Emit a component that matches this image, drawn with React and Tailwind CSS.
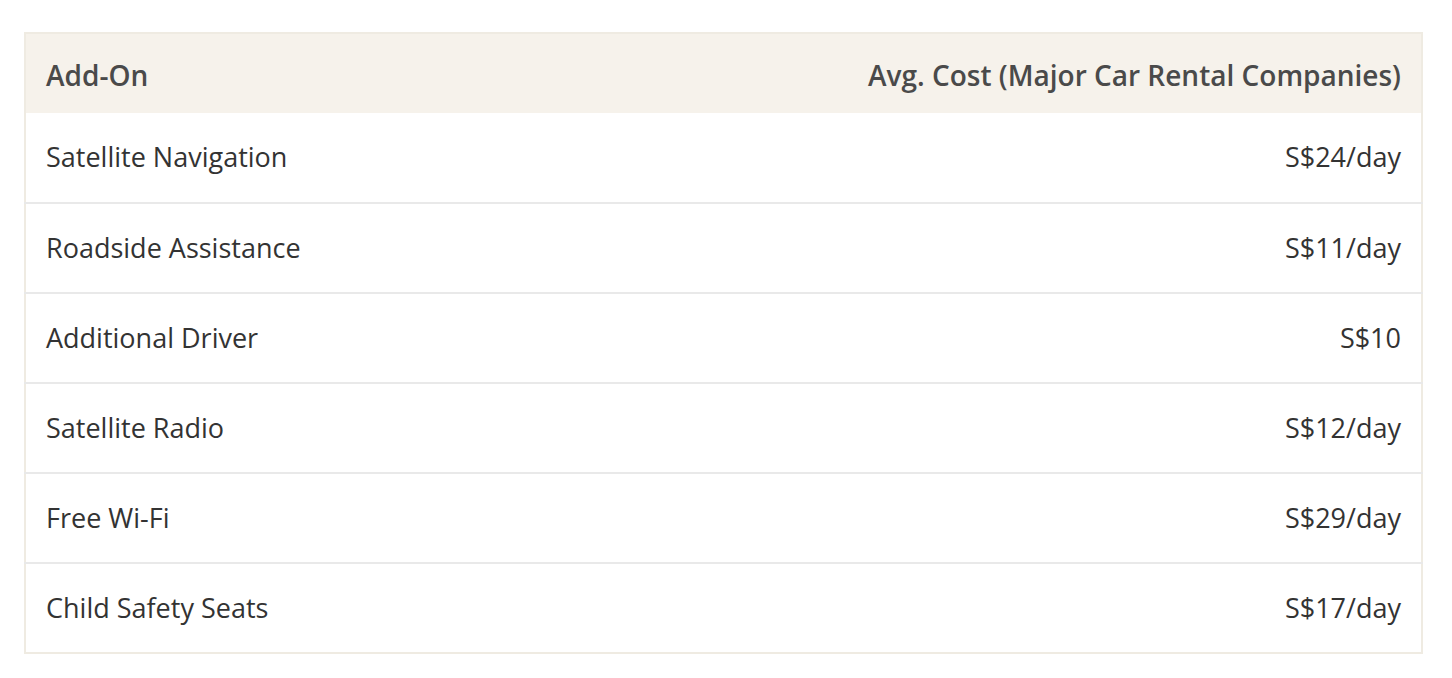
export default function App() {
  const rows = [
    ["Satellite Navigation", "S$24/day"],
    ["Roadside Assistance", "S$11/day"],
    ["Additional Driver", "S$10"],
    ["Satellite Radio", "S$12/day"],
    ["Free Wi-Fi", "S$29/day"],
    ["Child Safety Seats", "S$17/day"],
  ];
  return (
    <div className="w-[1452px] h-[678px] bg-white pt-[32px] px-[24px]" style={{ fontFamily: "'Open Sans', sans-serif" }}>
      <table className="w-[1399px] border-collapse border-2 border-[#efebe2]">
        <thead>
          <tr className="bg-[#f6f2eb] h-[80px] text-[#4a4a4a] text-[28px] font-semibold">
            <th className="text-left pl-[20px] pt-[3px] font-semibold">Add-On</th>
            <th className="text-right pr-[20px] pt-[3px] font-semibold">Avg. Cost (Major Car Rental Companies)</th>
          </tr>
        </thead>
        <tbody>
          {rows.map(([a, b], i) => (
            <tr key={i} className={`h-[90px] text-[27px] text-[#333333] ${i < rows.length - 1 ? "border-b-2 border-[#e9e9e9]" : ""}`}>
              <td className="text-left pl-[20px]">{a}</td>
              <td className="text-right pr-[20px]">{b}</td>
            </tr>
          ))}
        </tbody>
      </table>
    </div>
  );
}
